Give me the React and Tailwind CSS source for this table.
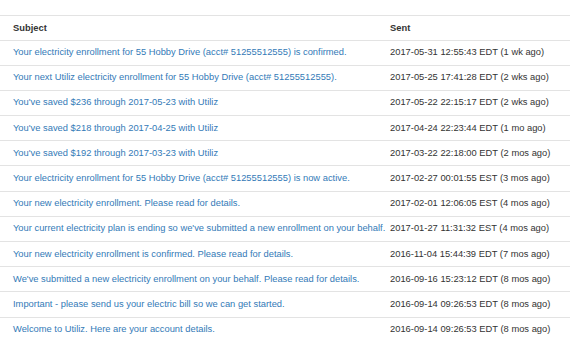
import React from 'react';

const rows = [
  ['Your electricity enrollment for 55 Hobby Drive (acct# 51255512555) is confirmed.', '2017-05-31 12:55:43 EDT (1 wk ago)'],
  ['Your next Utiliz electricity enrollment for 55 Hobby Drive (acct# 51255512555).', '2017-05-25 17:41:28 EDT (2 wks ago)'],
  ["You've saved $236 through 2017-05-23 with Utiliz", '2017-05-22 22:15:17 EDT (2 wks ago)'],
  ["You've saved $218 through 2017-04-25 with Utiliz", '2017-04-24 22:23:44 EDT (1 mo ago)'],
  ["You've saved $192 through 2017-03-23 with Utiliz", '2017-03-22 22:18:00 EDT (2 mos ago)'],
  ['Your electricity enrollment for 55 Hobby Drive (acct# 51255512555) is now active.', '2017-02-27 00:01:55 EST (3 mos ago)'],
  ['Your new electricity enrollment. Please read for details.', '2017-02-01 12:06:05 EST (4 mos ago)'],
  ["Your current electricity plan is ending so we've submitted a new enrollment on your behalf.", '2017-01-27 11:31:32 EST (4 mos ago)'],
  ['Your new electricity enrollment is confirmed. Please read for details.', '2016-11-04 15:44:39 EDT (7 mos ago)'],
  ["We've submitted a new electricity enrollment on your behalf. Please read for details.", '2016-09-16 15:23:12 EDT (8 mos ago)'],
  ['Important - please send us your electric bill so we can get started.', '2016-09-14 09:26:53 EDT (8 mos ago)'],
  ['Welcome to Utiliz. Here are your account details.', '2016-09-14 09:26:53 EDT (8 mos ago)'],
];

const App = () => {
  return (
    <div className="w-[570px] h-[360px] bg-white pt-[15px] overflow-hidden font-['Liberation_Sans',Arial,sans-serif] text-[9.35px] text-[#333]">
      <table className="w-full border-collapse table-fixed">
        <colgroup>
          <col className="w-[384px]" />
          <col />
        </colgroup>
        <thead>
          <tr>
            <th className="text-left font-bold border-t border-b-[1.5px] border-[#e3e3e3] pl-[13px] py-[5.5px] leading-[12.5px]">Subject</th>
            <th className="text-left font-bold border-t border-b-[1.5px] border-[#e3e3e3] pl-[6px] py-[5.5px] leading-[12.5px]">Sent</th>
          </tr>
        </thead>
        <tbody>
          {rows.map(([subject, sent], i) => (
            <tr key={i}>
              <td className={`pl-[13px] py-[5.6px] leading-[13px] whitespace-nowrap ${i > 0 ? 'border-t border-[#e3e3e3]' : ''}`}>
                <a href="#" className="text-[#337ab7]">{subject}</a>
              </td>
              <td className={`pl-[6px] py-[5.6px] leading-[13px] whitespace-nowrap ${i > 0 ? 'border-t border-[#e3e3e3]' : ''}`}>
                {sent}
              </td>
            </tr>
          ))}
        </tbody>
      </table>
    </div>
  );
};

export default App;
